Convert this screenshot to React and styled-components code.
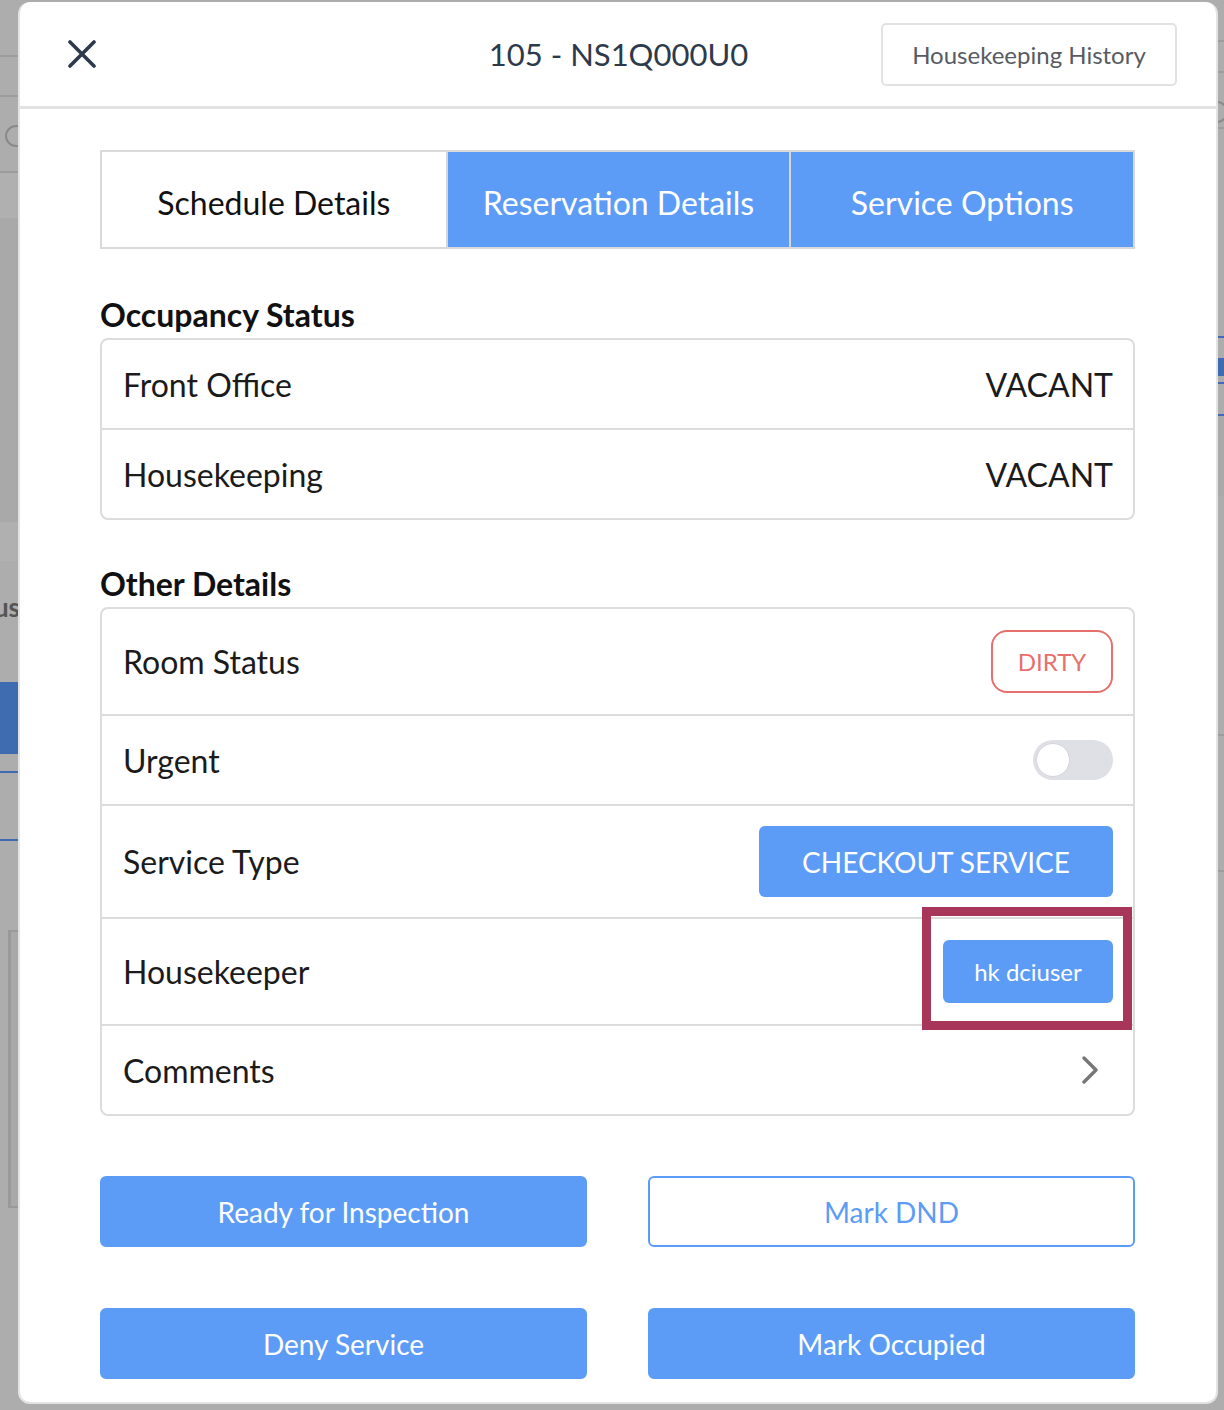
import React from "react";
import styled, { createGlobalStyle } from "styled-components";

const Global = createGlobalStyle`
  *, *::before, *::after { box-sizing: border-box; }
  html, body { margin: 0; padding: 0; background: #adadad; }
  body { font-family: Lato, "Open Sans", "Liberation Sans", sans-serif; }
`;

const BLUE = "#5c9cf6";

const Page = styled.div`
  position: relative;
  width: 1224px;
  height: 1410px;
  overflow: hidden;
  background: #adadad;
`;

const Backdrop = styled.div`
  display: flex;
  justify-content: space-between;
  height: 100%;
`;

const Rail = styled.div`
  width: ${(p) => p.$w}px;
  display: flex;
  flex-direction: column;
`;

const Seg = styled.div`
  flex: none;
  position: relative;
  overflow: hidden;
  background: ${(p) => p.$bg || "#adadad"};
  border-bottom: ${(p) => (p.$line ? `2px solid ${p.$line}` : "none")};
  ${(p) => p.$box && `border-left: 3px solid #999; margin-left: 8px; border-top: 2px solid #999; border-bottom: 2px solid #999; background: #a9a9a9;`}
`;

const RailText = styled.span`
  position: absolute;
  right: -2px;
  top: 30px;
  font-weight: 700;
  font-size: 26px;
  color: #555;
`;

const RailCircle = styled.span`
  position: absolute;
  left: ${(p) => p.$left}px;
  top: 28px;
  width: 22px;
  height: 22px;
  border: 2px solid #8a8a8a;
  border-radius: 50%;
`;

const Modal = styled.div`
  position: absolute;
  top: 2px;
  left: 18px;
  width: 1200px;
  height: 1402px;
  background: #fff;
  border: 2px solid #e3e3e3;
  border-top: none;
  border-radius: 12px;
  display: flex;
  flex-direction: column;
`;

const Header = styled.header`
  height: 107px;
  flex: none;
  display: grid;
  grid-template-columns: 1fr auto 1fr;
  align-items: center;
  padding: 0 39px 0 48px;
  border-bottom: 3px solid #e3e3e3;
`;

const CloseBtn = styled.button`
  justify-self: start;
  border: none;
  background: none;
  padding: 0;
  width: 28px;
  height: 28px;
  display: flex;
  align-items: center;
  justify-content: center;
  cursor: pointer;
`;

const Title = styled.h1`
  margin: 0 0 0 -8px;
  font-weight: 400;
  font-size: 31px;
  color: #2d3a4b;
`;

const HistoryBtn = styled.button`
  justify-self: end;
  width: 296px;
  height: 63px;
  border: 2px solid #e2e2e2;
  border-radius: 5px;
  background: #fff;
  font-family: inherit;
  font-size: 24px;
  color: #575b62;
`;

const Body = styled.div`
  padding: 41px 81px 0 80px;
  display: flex;
  flex-direction: column;
`;

const Tabs = styled.div`
  display: grid;
  grid-template-columns: repeat(3, 1fr);
  height: 99px;
  border: 2px solid #d9d9d9;
`;

const Tab = styled.div`
  display: flex;
  align-items: center;
  justify-content: center;
  padding-top: 5px;
  font-size: 32px;
  background: ${(p) => (p.$active ? "#fff" : BLUE)};
  color: ${(p) => (p.$active ? "#111" : "#fff")};
  & + & { border-left: 2px solid #d6d6d6; }
`;

const SectionTitle = styled.h2`
  margin: ${(p) => p.$top}px 0 5px;
  font-size: 32px;
  line-height: 36px;
  font-weight: 700;
  color: #111;
`;

const Card = styled.div`
  border: 2px solid #dcdcdc;
  border-radius: 8px;
`;

const Row = styled.div`
  position: relative;
  display: flex;
  align-items: center;
  justify-content: space-between;
  min-height: 88px;
  padding: ${(p) => p.$pad ?? 21}px 20px ${(p) => p.$pad ?? 21}px 21px;
  & + & { border-top: 2px solid #dcdcdc; min-height: 90px; }
`;

const Label = styled.span`
  font-size: 32px;
  color: #1b1b1b;
`;

const Value = styled.span`
  font-size: 32px;
  color: #1b1b1b;
`;

const Badge = styled.span`
  display: inline-flex;
  align-items: center;
  justify-content: center;
  width: 122px;
  height: 63px;
  border: 2px solid #e8706c;
  border-radius: 16px;
  font-size: 24px;
  color: #e8706c;
`;

const Toggle = styled.span`
  position: relative;
  display: inline-block;
  width: 80px;
  height: 40px;
  border-radius: 20px;
  background: #dfe0e6;
`;

const Knob = styled.span`
  position: absolute;
  left: 3px;
  top: 3px;
  width: 34px;
  height: 34px;
  border-radius: 50%;
  background: #fff;
  border: 1px solid #d4d5da;
`;

const PillBtn = styled.button`
  height: ${(p) => p.$h}px;
  width: ${(p) => p.$w}px;
  border: none;
  border-radius: 6px;
  background: ${BLUE};
  color: #fff;
  font-family: inherit;
  font-size: ${(p) => p.$fs}px;
  padding: 0;
`;

const HighlightWrap = styled.div`
  position: relative;
  display: flex;
`;

const Highlight = styled.span`
  position: absolute;
  z-index: 2;
  top: -33px;
  left: -21px;
  right: -19px;
  bottom: -27px;
  border: 9px solid #a8365b;
  pointer-events: none;
`;

const Chevron = styled.svg`
  margin-right: 10px;
`;

const Actions = styled.div`
  display: grid;
  grid-template-columns: 1fr 1fr;
  column-gap: 61px;
  row-gap: 61px;
  margin-top: 60px;
`;

const ActionBtn = styled.button`
  height: 71px;
  border-radius: 6px;
  font-family: inherit;
  font-size: 28px;
  padding: 0;
  border: 2px solid ${BLUE};
  background: ${(p) => (p.$outline ? "#fff" : BLUE)};
  color: ${(p) => (p.$outline ? BLUE : "#fff")};
`;

const leftSegs = [
  { h: 57, line: "#9c9c9c" },
  { h: 40, line: "#9c9c9c" },
  { h: 76, line: "#9c9c9c", circle: true },
  { h: 45, bg: "#b0b0b0" },
  { h: 304, bg: "#a9a9a9" },
  { h: 39, bg: "#b0b0b0" },
  { h: 121, text: "us" },
  { h: 72, bg: "#3f6cb0" },
  { h: 19, line: "#3f6cb0" },
  { h: 68, line: "#3f6cb0" },
  { h: 89 },
  { h: 278, box: true },
  { h: 195 },
];

const rightSegs = [
  { h: 42, line: "#9c9c9c" },
  { h: 31, line: "#9c9c9c" },
  { h: 56, line: "#9c9c9c", circle: true },
  { h: 209, line: "#3f6cb0" },
  { h: 20 },
  { h: 18, bg: "#3f6cb0" },
  { h: 8, line: "#3f6cb0" },
  { h: 32, line: "#3f6cb0" },
  { h: 80, bg: "#a9a9a9" },
  { h: 240, line: "#9c9c9c" },
  { h: 136, line: "#9c9c9c" },
  { h: 538 },
];

function RailSegs({ segs, side }) {
  return segs.map((s, i) => (
    <Seg key={i} $bg={s.bg} $line={s.line} $box={s.box} style={{ height: s.h }}>
      {s.text && <RailText>{s.text}</RailText>}
      {s.circle && <RailCircle $left={side === "left" ? 5 : -12} />}
    </Seg>
  ));
}

export default function App() {
  return (
    <Page>
      <Global />
      <Backdrop>
        <Rail $w={18}>
          <RailSegs segs={leftSegs} side="left" />
        </Rail>
        <Rail $w={6}>
          <RailSegs segs={rightSegs} side="right" />
        </Rail>
      </Backdrop>
      <Modal>
        <Header>
          <CloseBtn aria-label="Close">
            <svg width="28" height="28" viewBox="0 0 28 28">
              <path d="M2 2 L26 26 M26 2 L2 26" stroke="#2d3a4b" strokeWidth="3.6" strokeLinecap="round" fill="none" />
            </svg>
          </CloseBtn>
          <Title>105 - NS1Q000U0</Title>
          <HistoryBtn>Housekeeping History</HistoryBtn>
        </Header>
        <Body>
          <Tabs>
            <Tab $active>Schedule Details</Tab>
            <Tab>Reservation Details</Tab>
            <Tab>Service Options</Tab>
          </Tabs>

          <SectionTitle $top={48}>Occupancy Status</SectionTitle>
          <Card>
            <Row>
              <Label>Front Office</Label>
              <Value>VACANT</Value>
            </Row>
            <Row>
              <Label>Housekeeping</Label>
              <Value>VACANT</Value>
            </Row>
          </Card>

          <SectionTitle $top={46}>Other Details</SectionTitle>
          <Card>
            <Row>
              <Label>Room Status</Label>
              <Badge>DIRTY</Badge>
            </Row>
            <Row>
              <Label>Urgent</Label>
              <Toggle>
                <Knob />
              </Toggle>
            </Row>
            <Row $pad={20}>
              <Label>Service Type</Label>
              <PillBtn $w={354} $h={71} $fs={28}>CHECKOUT SERVICE</PillBtn>
            </Row>
            <Row>
              <Label>Housekeeper</Label>
              <HighlightWrap>
                <PillBtn $w={170} $h={63} $fs={24}>hk dciuser</PillBtn>
                <Highlight />
              </HighlightWrap>
            </Row>
            <Row>
              <Label>Comments</Label>
              <Chevron width="24" height="28" viewBox="0 0 24 28">
                <path d="M5 2 L17 14 L5 26" stroke="#777" strokeWidth="3.4" strokeLinecap="round" strokeLinejoin="round" fill="none" />
              </Chevron>
            </Row>
          </Card>

          <Actions>
            <ActionBtn>Ready for Inspection</ActionBtn>
            <ActionBtn $outline>Mark DND</ActionBtn>
            <ActionBtn>Deny Service</ActionBtn>
            <ActionBtn>Mark Occupied</ActionBtn>
          </Actions>
        </Body>
      </Modal>
    </Page>
  );
}
